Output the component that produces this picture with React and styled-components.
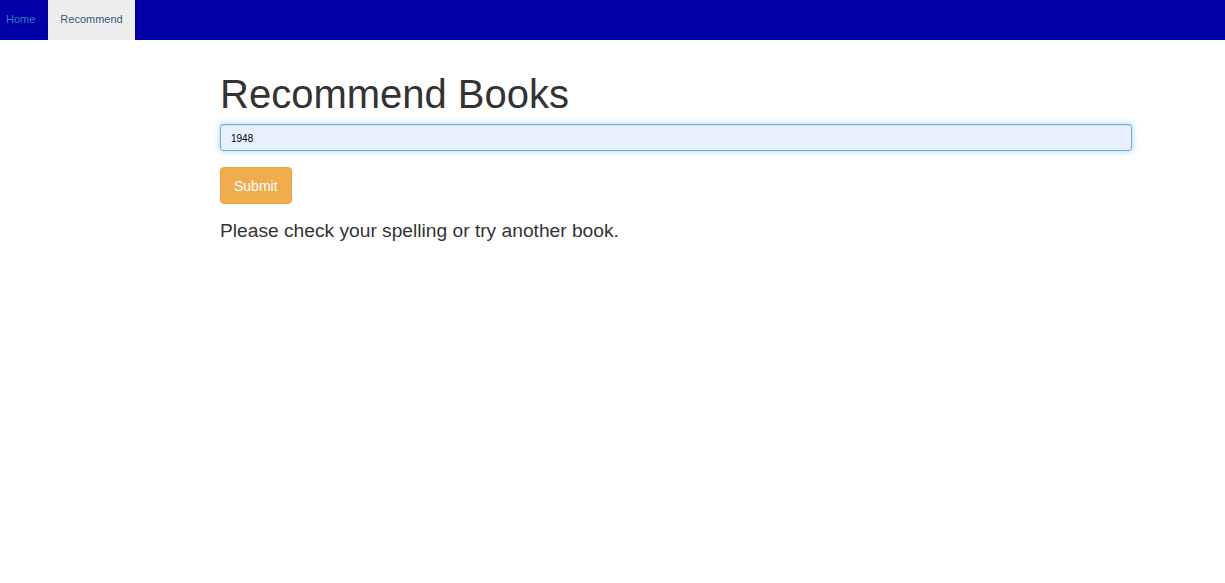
import styled, { createGlobalStyle } from "styled-components"

const GlobalStyle = createGlobalStyle`
    *{
        box-sizing: border-box;
    }
    body{
        margin: 0;
        background: #ffffff;
        font-family: "Liberation Sans", Arial, sans-serif;
        color: #333333;
    }
`

export default function App(){
    return(
        <>
            <GlobalStyle />
            <NavBar>
                <NavLink>Home</NavLink>
                <NavLink active>Recommend</NavLink>
            </NavBar>
            <Container>
                <Title>Recommend Books</Title>
                <SearchInput type="text" defaultValue="1948" />
                <SubmitButton>Submit</SubmitButton>
                <Message>Please check your spelling or try another book.</Message>
            </Container>
        </>
    )
}

const NavBar = styled.nav`
    display: flex;
    height: 40px;
    background-color: #0000a6;
`
const NavLink = styled.a`
    display: flex;
    align-items: center;
    height: 40px;
    padding: ${props => props.active ? "0 12px 2px" : "0 13px 2px 6px"};
    font-size: 11px;
    color: ${props => props.active ? "#34577f" : "#3579c0"};
    background-color: ${props => props.active ? "#eeeeee" : "transparent"};
    cursor: pointer;
`
const Container = styled.main`
    width: 912px;
    margin-left: 220px;
    padding-top: 32px;
    display: flex;
    flex-direction: column;
    align-items: flex-start;
`
const Title = styled.h1`
    margin: 0 0 8px;
    font-size: 40px;
    font-weight: 400;
    line-height: 44px;
    color: #333333;
`
const SearchInput = styled.input`
    width: 100%;
    height: 27px;
    padding: 1px 10px 0;
    font-family: inherit;
    font-size: 10px;
    color: #000000;
    background-color: #e8f0fe;
    border: 1px solid #66afe9;
    border-radius: 3px;
    outline: none;
    box-shadow: inset 0 1px 1px rgba(0,0,0,.075), 0 0 6px rgba(102,175,233,.6);
`
const SubmitButton = styled.button`
    margin-top: 16px;
    height: 37px;
    padding: 0 13px;
    font-family: inherit;
    font-size: 14px;
    color: #ffffff;
    background-color: #f0ad4e;
    border: 1px solid #eea236;
    border-radius: 4px;
    cursor: pointer;
`
const Message = styled.p`
    margin: 13px 0 0;
    font-size: 19.2px;
    line-height: 27px;
    color: #333333;
`
